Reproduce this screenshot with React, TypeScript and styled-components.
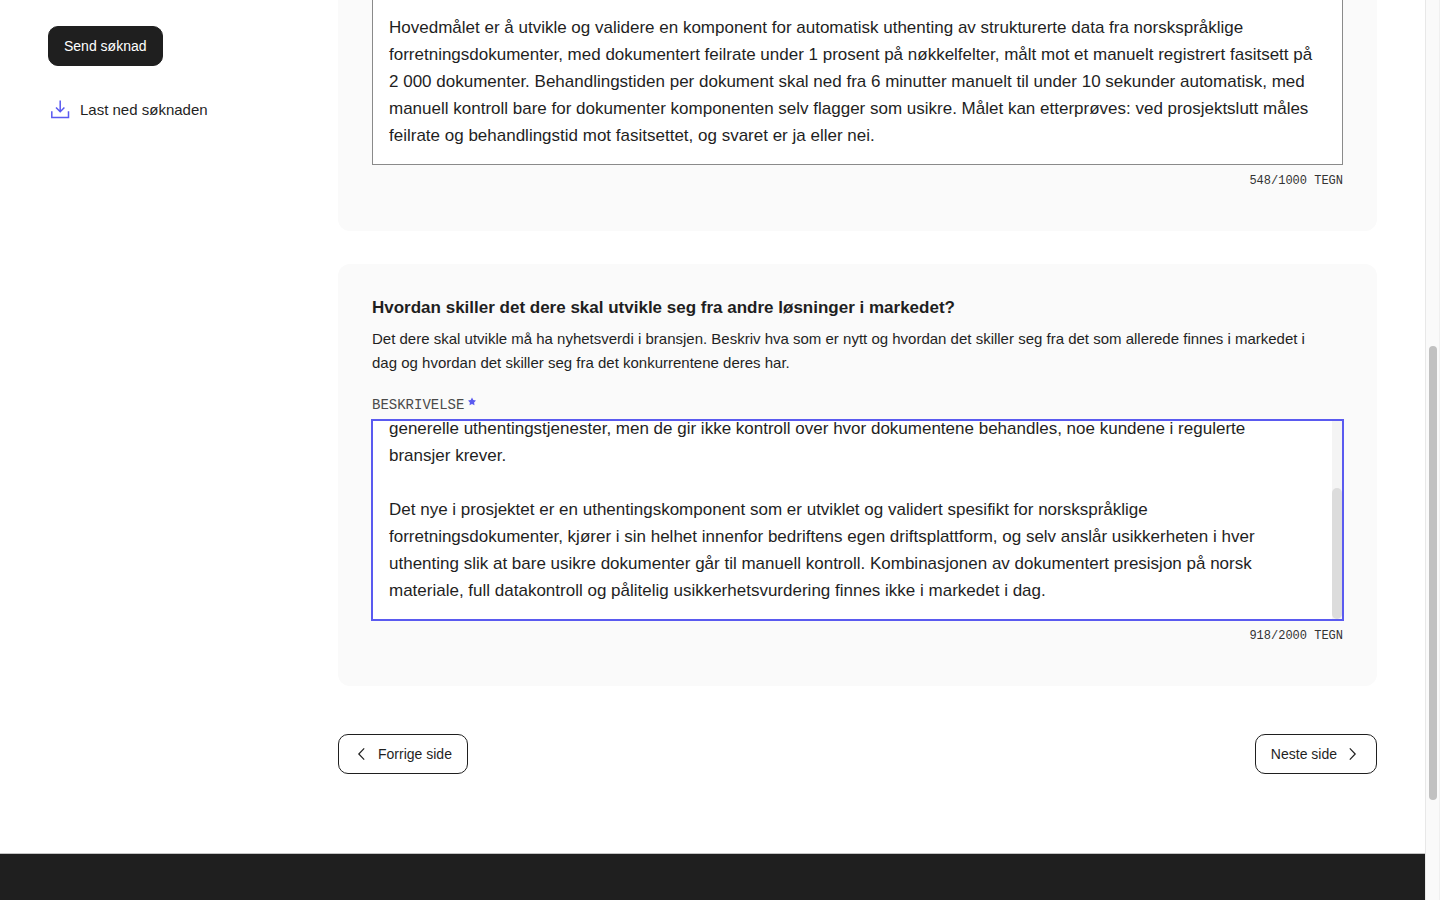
import React, { useLayoutEffect, useRef } from "react";
import styled, { createGlobalStyle } from "styled-components";

const ink = "#1f1f1f";
const accent = "#5a5af0";
const sans = `"Liberation Sans", Arial, Helvetica, sans-serif`;
const mono = `"Liberation Mono", "Courier New", monospace`;

const GlobalStyle = createGlobalStyle`
  *, *::before, *::after { box-sizing: border-box; }
  body {
    margin: 0;
    background: #fff;
    color: ${ink};
    font-family: ${sans};
  }
`;

const Shell = styled.div`
  display: flex;
  min-height: 100vh;
`;

const Page = styled.div`
  flex: 1;
  min-width: 0;
  display: flex;
  flex-direction: column;
`;

const Layout = styled.div`
  display: grid;
  grid-template-columns: 290px minmax(0, 1fr);
  padding: 0 48px 79px;
`;

const Sidebar = styled.aside`
  display: flex;
  flex-direction: column;
  align-items: flex-start;
  gap: 32px;
  padding-top: 26px;
`;

const Button = styled.button<{ $filled?: boolean }>`
  display: inline-flex;
  align-items: center;
  gap: 8px;
  height: 40px;
  padding: 0 15px;
  border: 1px solid ${ink};
  border-radius: 10px;
  background: ${(p) => (p.$filled ? ink : "#fff")};
  color: ${(p) => (p.$filled ? "#fff" : ink)};
  font-family: ${sans};
  font-size: 14px;
  line-height: 20px;
  white-space: nowrap;
  cursor: pointer;
`;

const DownloadLink = styled.a`
  display: inline-flex;
  align-items: center;
  gap: 8px;
  color: ${ink};
  font-size: 15px;
  line-height: 24px;
  text-decoration: none;
`;

const Main = styled.main`
  min-width: 0;
`;

const Card = styled.section<{ $continued?: boolean }>`
  padding: ${(p) => (p.$continued ? "0" : "32px")} 34px 42px;
  margin-bottom: ${(p) => (p.$continued ? "33px" : "48px")};
  border-radius: ${(p) => (p.$continued ? "0 0 12px 12px" : "12px")};
  background: #fafafa;
`;

const Question = styled.h2`
  margin: 0 0 7px;
  font-size: 17px;
  line-height: 24px;
  font-weight: 700;
`;

const Help = styled.p`
  margin: 0 0 18px;
  padding-right: 24px;
  font-size: 15px;
  line-height: 24px;
`;

const Label = styled.label`
  display: flex;
  gap: 4px;
  margin-bottom: 3px;
  color: #4a4a4a;
  font-family: ${mono};
  font-size: 14px;
  line-height: 24px;
`;

const Field = styled.div<{ $active?: boolean; $continued?: boolean }>`
  display: flex;
  height: ${(p) => (p.$continued ? "165px" : "200px")};
  border: 1px solid ${(p) => (p.$active ? accent : "#8a8a8a")};
  border-top-width: ${(p) => (p.$continued ? "0" : "1px")};
  box-shadow: ${(p) => (p.$active ? `0 0 0 1px ${accent}` : "none")};
  background: #fff;
`;

const TextArea = styled.textarea<{ $continued?: boolean }>`
  flex: 1;
  min-width: 0;
  padding: ${(p) => (p.$continued ? "14px" : "16px")} 0 15px 16px;
  border: 0;
  outline: 0;
  resize: none;
  background: transparent;
  color: ${ink};
  font-family: ${sans};
  font-size: 17px;
  line-height: 27px;
  white-space: pre;
  scrollbar-width: none;
`;

const FieldTrack = styled.div`
  display: flex;
  flex-direction: column;
  justify-content: flex-end;
  width: 10px;
  background: #f4f4f4;
`;

const FieldThumb = styled.div`
  height: 66%;
  border-radius: 5px;
  background: #dcdcdc;
`;

const Counter = styled.div`
  margin-top: 8px;
  text-align: right;
  color: #333;
  font-family: ${mono};
  font-size: 12px;
  line-height: 16px;
`;

const Pager = styled.nav`
  display: flex;
  justify-content: space-between;
`;

const Footer = styled.footer`
  flex: 1;
  min-height: 46px;
  border-top: 1px solid #c4c4c4;
  background: ${ink};
`;

const PageTrack = styled.div`
  display: flex;
  flex-direction: column;
  align-items: center;
  width: 15px;
  height: 100vh;
  border-left: 1px solid #e8e8e8;
  border-right: 1px solid #f0f0f0;
  background: #fafafa;
`;

const PageThumb = styled.div`
  width: 8px;
  border-radius: 4px;
  background: #c1c1c1;
`;

const TrackSpace = styled.div`
  flex: 0 0 auto;
`;

const goalText = `Hovedmålet er å utvikle og validere en komponent for automatisk uthenting av strukturerte data fra norskspråklige
forretningsdokumenter, med dokumentert feilrate under 1 prosent på nøkkelfelter, målt mot et manuelt registrert fasitsett på
2 000 dokumenter. Behandlingstiden per dokument skal ned fra 6 minutter manuelt til under 10 sekunder automatisk, med
manuell kontroll bare for dokumenter komponenten selv flagger som usikre. Målet kan etterprøves: ved prosjektslutt måles
feilrate og behandlingstid mot fasitsettet, og svaret er ja eller nei.`;

const noveltyText = `generelle uthentingstjenester, men de gir ikke kontroll over hvor dokumentene behandles, noe kundene i regulerte
bransjer krever.

Det nye i prosjektet er en uthentingskomponent som er utviklet og validert spesifikt for norskspråklige
forretningsdokumenter, kjører i sin helhet innenfor bedriftens egen driftsplattform, og selv anslår usikkerheten i hver
uthenting slik at bare usikre dokumenter går til manuell kontroll. Kombinasjonen av dokumentert presisjon på norsk
materiale, full datakontroll og pålitelig usikkerhetsvurdering finnes ikke i markedet i dag.`;

const DownloadIcon = () => (
  <svg width="24" height="24" viewBox="0 0 24 24" fill="none" stroke={accent} strokeWidth="1.5" aria-hidden="true">
    <path d="M12.2 2.5v11M8 9.4l4.2 4.3 4.2-4.3M3.8 13.2v6.3h16.7v-6.3" />
  </svg>
);

const Chevron = ({ d }: { d: string }) => (
  <svg width="16" height="16" viewBox="0 0 16 16" fill="none" stroke={ink} strokeWidth="1.2" aria-hidden="true">
    <path d={d} />
  </svg>
);

const RequiredMark = () => (
  <svg width="8" height="16" viewBox="0 0 8 16" fill={accent} aria-hidden="true">
    <path d="M4 4.6L5.3 7l2.7.5-1.9 2 .4 2.7L4 11l-2.5 1.200.400-2.700L0 7.500 2.700 7z" />
  </svg>
);

export default function App() {
  const novelty = useRef<HTMLTextAreaElement>(null);

  useLayoutEffect(() => {
    if (novelty.current) novelty.current.scrollTop = novelty.current.scrollHeight;
  }, []);

  return (
    <>
      <GlobalStyle />
      <Shell>
        <Page>
          <Layout>
            <Sidebar>
              <Button $filled type="button">Send søknad</Button>
              <DownloadLink href="#last-ned">
                <DownloadIcon />
                Last ned søknaden
              </DownloadLink>
            </Sidebar>
            <Main>
              <Card $continued>
                <Field $continued>
                  <TextArea $continued aria-label="Hovedmål" spellCheck={false} defaultValue={goalText} />
                </Field>
                <Counter>548/1000 TEGN</Counter>
              </Card>
              <Card>
                <Question>Hvordan skiller det dere skal utvikle seg fra andre løsninger i markedet?</Question>
                <Help>
                  Det dere skal utvikle må ha nyhetsverdi i bransjen. Beskriv hva som er nytt og hvordan det skiller seg
                  fra det som allerede finnes i markedet i dag og hvordan det skiller seg fra det konkurrentene deres har.
                </Help>
                <Label htmlFor="beskrivelse">
                  BESKRIVELSE
                  <RequiredMark />
                </Label>
                <Field $active>
                  <TextArea id="beskrivelse" ref={novelty} spellCheck={false} defaultValue={noveltyText} />
                  <FieldTrack aria-hidden="true">
                    <FieldThumb />
                  </FieldTrack>
                </Field>
                <Counter>918/2000 TEGN</Counter>
              </Card>
              <Pager aria-label="Sider">
                <Button type="button">
                  <Chevron d="M10.2 2.4L4.8 8l5.4 5.6" />
                  Forrige side
                </Button>
                <Button type="button">
                  Neste side
                  <Chevron d="M4.8 2.4L10.2 8l-5.4 5.6" />
                </Button>
              </Pager>
            </Main>
          </Layout>
          <Footer />
        </Page>
        <PageTrack aria-hidden="true">
          <TrackSpace style={{ height: "38.4%" }} />
          <PageThumb style={{ height: "50.5%" }} />
        </PageTrack>
      </Shell>
    </>
  );
}
